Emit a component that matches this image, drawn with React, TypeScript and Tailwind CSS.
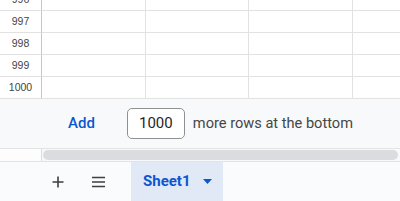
export default function App() {
  const rows = ["996", "997", "998", "999", "1000"];
  return (
    <div className="w-[400px] h-[201px] overflow-hidden bg-white flex flex-col" style={{ fontFamily: "Roboto, 'Liberation Sans', Arial, sans-serif" }}>
      {/* grid */}
      <div className="flex flex-col -mt-[11px]">
        {rows.map((r) => (
          <div key={r} className="flex h-[22px] shrink-0">
            <div
              className="w-[42px] shrink-0 border-r border-b border-r-[#c4c7c5] border-b-[#e1e1e1] flex items-center justify-center text-[10.5px] text-[#444]"
              style={{ fontFamily: "'Liberation Sans', Arial, sans-serif" }}
            >
              {r}
            </div>
            <div className="w-[104px] shrink-0 border-r border-b border-[#e2e2e2]" />
            <div className="w-[103px] shrink-0 border-r border-b border-[#e2e2e2]" />
            <div className="w-[104px] shrink-0 border-r border-b border-[#e2e2e2]" />
            <div className="flex-1 border-b border-[#e2e2e2]" />
          </div>
        ))}
      </div>

      {/* add rows */}
      <div className="h-[50px] shrink-0 bg-[#f8f9fa] flex items-center border-b border-[#e3e3e3]">
        <span className="ml-[68px] text-[15px] font-medium text-[#0b57d0]">Add</span>
        <div className="ml-[32px] w-[58px] h-[31px] rounded-[5px] border border-[#8e918f] bg-white flex items-center justify-center text-[15px] text-[#1f1f1f]">
          1000
        </div>
        <span className="ml-[8px] text-[14.6px] text-[#444746]">more rows at the bottom</span>
      </div>

      {/* horizontal scrollbar */}
      <div className="h-[13px] shrink-0 flex border-b border-[#e3e3e3]">
        <div className="w-[42px] shrink-0 bg-[#fdfdfd] border-r border-[#dadce0]" />
        <div className="flex-1 bg-[#f8f9fa] flex items-center pl-[1px] pr-[2px]">
          <div className="h-[10px] w-full rounded-full bg-[#dadce0]" />
        </div>
      </div>

      {/* sheet tabs */}
      <div className="flex-1 bg-[#f9fbfd] flex items-stretch">
        <div className="ml-[50px] w-[16px] flex items-center justify-center">
          <svg width="14" height="14" viewBox="0 0 14 14">
            <path d="M7 1.5v11M1.5 7h11" stroke="#3c4043" strokeWidth="1.6" />
          </svg>
        </div>
        <div className="ml-[24px] w-[16px] flex items-center justify-center">
          <svg width="15" height="12" viewBox="0 0 15 12">
            <path d="M1 1.5h13M1 6h13M1 10.5h13" stroke="#3c4043" strokeWidth="1.6" />
          </svg>
        </div>
        <div className="ml-[25px] w-[92px] bg-[#e1e9f7] flex items-center pl-[12px]">
          <span className="text-[15px] font-bold text-[#0b57d0]">Sheet1</span>
          <svg className="ml-[12px]" width="9" height="5" viewBox="0 0 9 5">
            <path d="M0 0h9L4.5 5z" fill="#0b57d0" />
          </svg>
        </div>
      </div>
    </div>
  );
}
